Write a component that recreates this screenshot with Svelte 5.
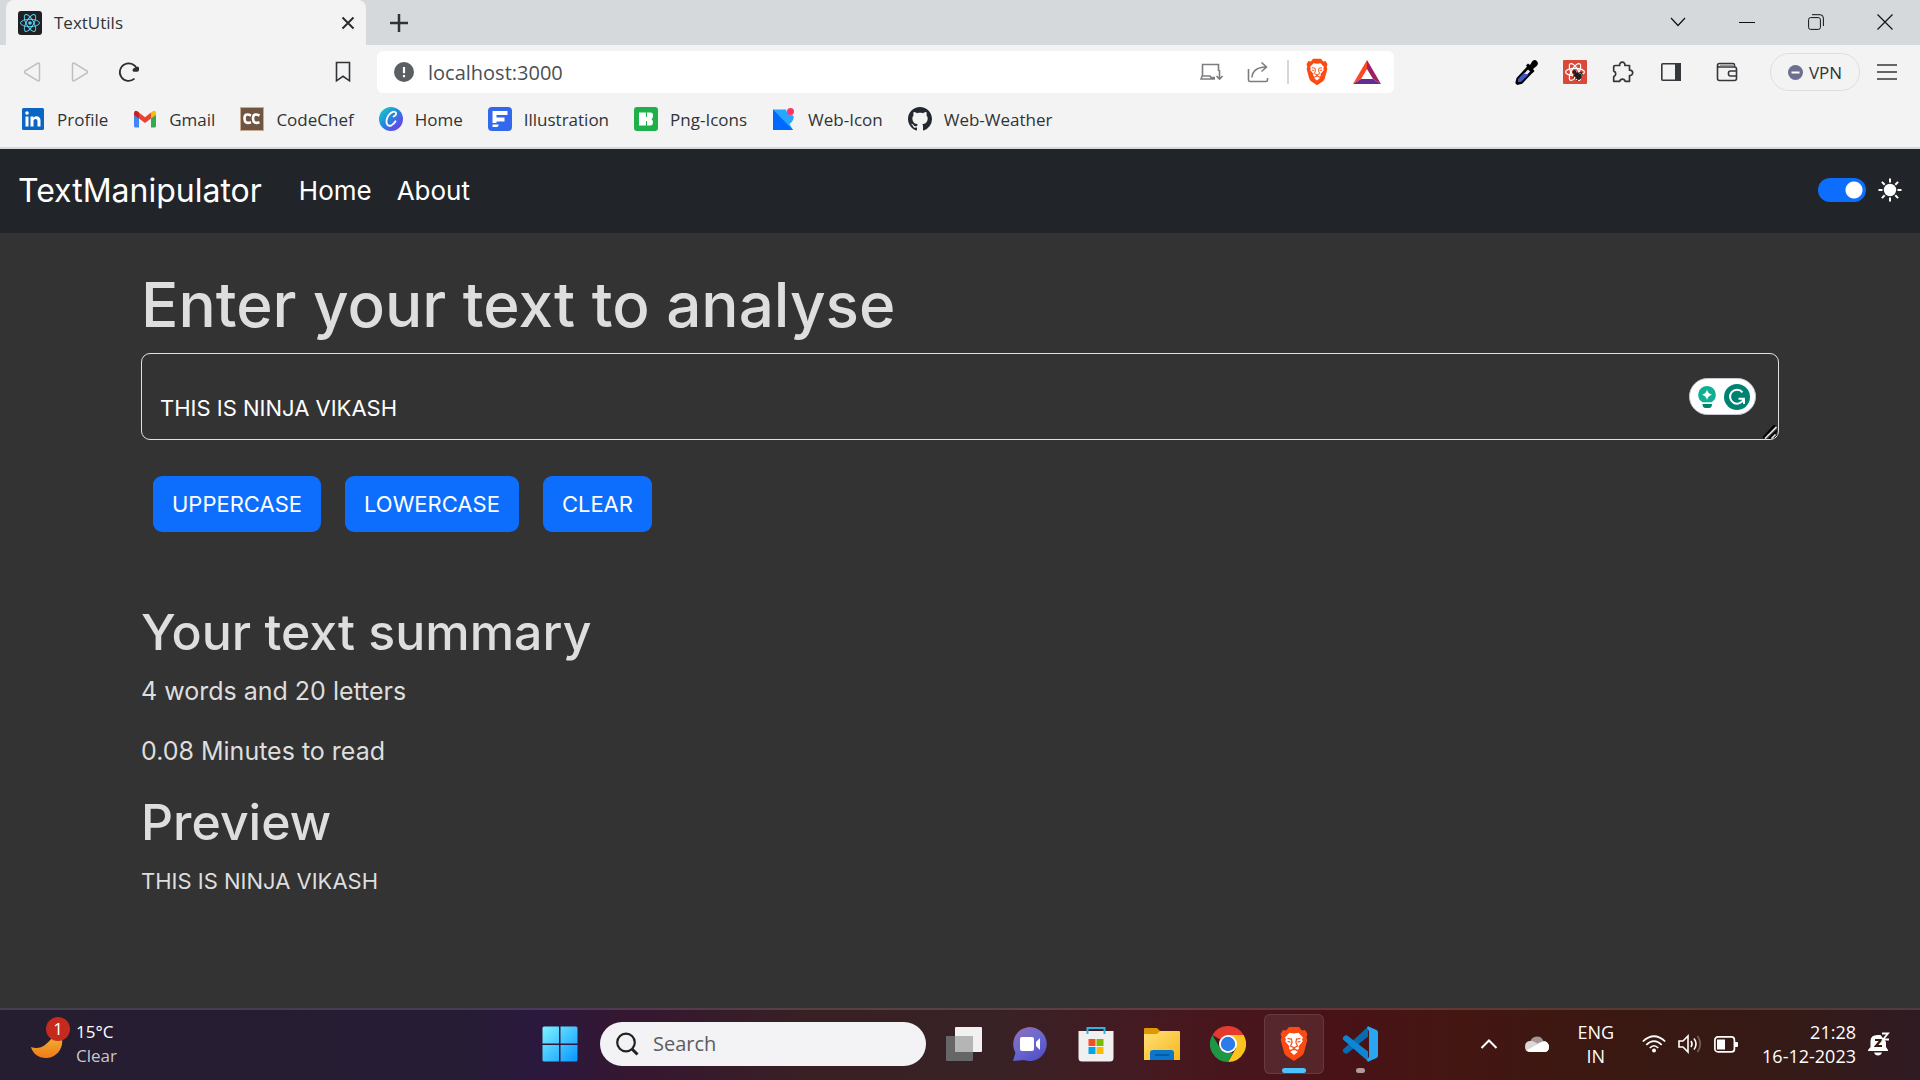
<script>
  let text = $state('\nTHIS IS NINJA VIKASH');
  let dark = $state(true);
  let address = $state('localhost:3000');

  const words = $derived(text.split(/\s+/).filter(Boolean).length);
  const letters = $derived(text.trim().length);
  const minutes = $derived((0.02 * words).toFixed(2));
</script>

{#snippet lion()}
  <path fill="#fb4a12" d="M10 1h10l3 3.400 3-.4 2.500 4-1 3 .8 3-3.300 12.500c-.5 1.600-1.500 2.800-2.800 3.700L15 35l-7.200-4.800c-1.300-.9-2.300-2.100-2.800-3.700L1.700 14l.8-3-1-3L4 4l3 .4z" />
  <path fill="#fff" d="M15 7.500l4.500-.7 4.500 4.700-1 2 .8 1.800-4.300 5.200.6 1.800-1.500 1.700-3.600-2.200-3.600 2.200-1.500-1.700.6-1.800-4.300-5.200.8-1.800-1-2 4.500-4.700zM15 23.500l3.800 2.300L15 29l-3.800-3.200z" />
  <path fill="none" stroke="#fb4a12" stroke-width="1.200" d="M8.500 12.500l4 .6.6 3.400-1.600 3.500 3.500 1.800 3.500-1.800-1.600-3.500.6-3.400 4-.6M15 21.500v3M8.500 15.500l3 .6M21.500 15.500l-3 .6" />
{/snippet}

{#snippet atom(color, width)}
  <g fill="none" stroke={color} stroke-width={width}>
    <ellipse cx="12" cy="12" rx="9.500" ry="3.700" />
    <ellipse cx="12" cy="12" rx="9.500" ry="3.700" transform="rotate(60 12 12)" />
    <ellipse cx="12" cy="12" rx="9.500" ry="3.700" transform="rotate(120 12 12)" />
  </g>
  <circle cx="12" cy="12" r="1.800" fill={color} />
{/snippet}

<div class="desktop">
  <header class="browser">
    <div class="tabs">
      <div class="tab">
        <svg width="24" height="24" viewBox="0 0 24 24" aria-hidden="true">
          <rect width="24" height="24" rx="3" fill="#202124" />
          {@render atom('#5ccfee', 1)}
        </svg>
        <span>TextUtils</span>
        <button class="plain" aria-label="Close tab">
          <svg width="16" height="16" viewBox="0 0 16 16"><path d="M2.500 2.500l11 11M13.500 2.500l-11 11" stroke="#2b2d30" stroke-width="2" /></svg>
        </button>
      </div>
      <button class="plain newtab" aria-label="New tab">
        <svg width="20" height="20" viewBox="0 0 20 20"><path d="M10 1v18M1 10h18" stroke="#303336" stroke-width="2.500" /></svg>
      </button>
      <div class="window-controls">
        <button class="plain" aria-label="Search tabs">
          <svg width="16" height="16" viewBox="0 0 16 16"><path d="M1 4l7 7.500L15 4" fill="none" stroke="#111" stroke-width="1.200" /></svg>
        </button>
        <button class="plain" aria-label="Minimize">
          <svg width="16" height="16" viewBox="0 0 16 16"><path d="M0 8.500h16" stroke="#111" /></svg>
        </button>
        <button class="plain" aria-label="Restore">
          <svg width="16" height="16" viewBox="0 0 16 16" fill="none" stroke="#111"><rect x=".6" y="3.600" width="11.800" height="11.800" rx="2" /><path d="M4 .7h8a3.400 3.400 0 0 1 3.400 3.400V12" /></svg>
        </button>
        <button class="plain" aria-label="Close">
          <svg width="16" height="16" viewBox="0 0 16 16"><path d="M.5.5l15 15M15.500.5l-15 15" stroke="#111" stroke-width="1.200" /></svg>
        </button>
      </div>
    </div>

    <div class="toolbar">
      <div class="nav-tools">
        <button class="plain" aria-label="Back">
          <svg width="20" height="22" viewBox="0 0 20 22"><path d="M15.500 2.300q2-1 2 1v15.400q0 2-2 1L3.200 12.200q-1.400-1.200 0-2.400z" fill="none" stroke="#bcbec0" stroke-width="1.500" /></svg>
        </button>
        <button class="plain" aria-label="Forward">
          <svg width="20" height="22" viewBox="0 0 20 22"><path d="M4.500 2.300q-2-1-2 1v15.400q0 2 2 1l12.300-7.500q1.400-1.200 0-2.400z" fill="none" stroke="#bcbec0" stroke-width="1.500" /></svg>
        </button>
        <button class="plain" aria-label="Reload">
          <svg width="22" height="22" viewBox="0 0 22 22"><path d="M16.500 17.700A8.800 8.800 0 1 1 19 8.500" fill="none" stroke="#2b2d30" stroke-width="1.700" /><path d="M14.500 9.300q0-2 2-2.300l3.200-1.500q1.300 0 1.300 1.500v2q0 1.800-2 1.800h-2.500q-2 0-2-1.500z" fill="#2b2d30" /></svg>
        </button>
        <button class="plain bookmark-btn" aria-label="Bookmark this page">
          <svg width="16" height="22" viewBox="0 0 16 22"><path d="M1.500 1.500h13v18.300L8 15.300l-6.500 4.500z" fill="none" stroke="#303336" stroke-width="1.600" /></svg>
        </button>
      </div>

      <div class="address">
        <svg width="20" height="20" viewBox="0 0 20 20" aria-hidden="true"><circle cx="10" cy="10" r="10" fill="#5b5e63" /><path d="M10 5v6.200M10 13v2.200" stroke="#fff" stroke-width="2.200" /></svg>
        <input aria-label="Address" bind:value={address} />
        <button class="plain" aria-label="Install app">
          <svg width="23" height="18" viewBox="0 0 23 18" fill="none" stroke="#7b7d80" stroke-width="1.600"><path d="M2.500 12V1.500h16V8M2.500 12l-1.500 4h14M2 13h8l1 1.500h4M19.500 7v9M16.500 13l3 3.200 3-3.200" /></svg>
        </button>
        <button class="plain" aria-label="Share">
          <svg width="22" height="22" viewBox="0 0 22 22" fill="none" stroke="#7b7d80" stroke-width="1.600"><path d="M1.500 8v11q0 1.500 1.500 1.500h16q1.500 0 1.500-1.500v-2M5 16.500Q5.500 6.500 19 6M14.500 1.500L19.500 6l-5 4.500" /></svg>
        </button>
        <span class="rule"></span>
        <button class="plain" aria-label="Brave Shields">
          <svg width="24" height="28" viewBox="0 0 30 36">{@render lion()}</svg>
        </button>
        <button class="plain" aria-label="Brave Rewards">
          <svg width="28" height="24" viewBox="0 0 28 24"><path d="M14 0L0 24l8-5 6-10z" fill="#ff4724" /><path d="M14 0l14 24-8-5-6-10z" fill="#9e1f63" /><path d="M0 24l8-5h12l8 5z" fill="#662d91" /></svg>
        </button>
      </div>

      <div class="extensions">
        <button class="plain" aria-label="Color picker">
          <svg width="24" height="26" viewBox="0 0 24 26"><path d="M13 8.500l4 4L6.500 23.500l-4 1-.8-.8 1-4z" fill="#dfe6ff" stroke="#000" stroke-width="2.600" /><path d="M8.500 14.500l5 1L6 23H3v-3z" fill="#3f58c8" /><path d="M11 6.500l2-2 2 1.500 2.500-4Q20 0 22 2.200q2 2.300-.3 4.800L18 10l1.500 2-2 2z" fill="#000" /></svg>
        </button>
        <button class="plain" aria-label="React Developer Tools">
          <svg width="24" height="24" viewBox="0 0 24 24"><rect width="24" height="24" rx="1" fill="#d9493a" />{@render atom('#fff', 1.2)}<ellipse cx="15" cy="16" rx="4" ry="3" transform="rotate(45 15 16)" fill="#221c1c" /><circle cx="11.500" cy="12" r="2" fill="#221c1c" /><path d="M10 16l8-4M12 19l8-5M14 21l5-9M10 18l3-5" stroke="#221c1c" /></svg>
        </button>
        <button class="plain" aria-label="Extensions">
          <svg width="22" height="22" viewBox="0 0 22 22"><path d="M3.500 4.500h4.200a2.700 2.700 0 1 1 5.200 0h4.600v4.700a2.700 2.700 0 1 1 0 5.300v5.800h-4.300a2.800 2.800 0 0 0-5.500 0H1.700v-4.800a2.800 2.800 0 0 0 0-5.400V6q0-1.500 1.800-1.500z" fill="none" stroke="#34373b" stroke-width="1.700" stroke-linejoin="round" /></svg>
        </button>
        <button class="plain" aria-label="Sidebar">
          <svg width="20" height="18" viewBox="0 0 20 18"><rect x=".8" y=".8" width="18.400" height="16.400" rx="1" fill="none" stroke="#34373b" stroke-width="1.600" /><path d="M14 0h6v18h-6z" fill="#34373b" /></svg>
        </button>
        <button class="plain wallet" aria-label="Wallet">
          <svg width="22" height="20" viewBox="0 0 22 20" fill="none" stroke="#34373b" stroke-width="1.600"><path d="M1.500 3.500v13q0 2 2 2h15q2 0 2-2V7q0-2-2-2H3.500q-2 0-2-1.500 0-2 2-2H17q1.500 0 1.500 1.500v2M20.500 9h-6q-2 0-2 2v1q0 2 2 2h6" /><path d="M4 3.300h13" stroke="#999" /></svg>
        </button>
        <button class="plain vpn">
          <svg width="15" height="15" viewBox="0 0 15 15" aria-hidden="true"><circle cx="7.500" cy="7.500" r="7.500" fill="#6b7090" /><path d="M3.500 7.500h8" stroke="#fff" stroke-width="2" /></svg>
          VPN
        </button>
        <button class="plain" aria-label="Menu">
          <svg width="20" height="16" viewBox="0 0 20 16"><path d="M0 1h20M0 8h20M0 15h20" stroke="#34373b" stroke-width="1.600" /></svg>
        </button>
      </div>
    </div>

    <nav class="bookmarks" aria-label="Bookmarks">
      <a href="#profile">
        <svg width="24" height="24" viewBox="0 0 24 24"><rect x="1" y="1" width="22" height="22" rx="1.500" fill="#0a66c2" /><path d="M4.500 9.500h3v10h-3zM9.500 9.500h3v1.400c1.500-2.600 7-2.300 7 2.600v6h-3v-5.300c0-3-4-2.800-4 0v5.300h-3z" fill="#fff" /><circle cx="6" cy="6" r="1.800" fill="#fff" /></svg>
        Profile
      </a>
      <a href="#gmail">
        <svg width="24" height="24" viewBox="0 0 24 24"><path d="M1 6v13q0 1.500 1.500 1.500H6V9z" fill="#4285f4" /><path d="M23 6v13q0 1.500-1.500 1.500H18V9z" fill="#34a853" /><path d="M6 5.500l6 4.700 6-4.700v6L12 16l-6-4.500z" fill="#ea4335" /><path d="M1 6q.5-3.500 3.800-1.500L6 5.500v6L1 8z" fill="#c5221f" /><path d="M23 6q-.5-3.500-3.800-1.500L18 5.500v6L23 8z" fill="#fbbc04" /></svg>
        Gmail
      </a>
      <a href="#codechef">
        <svg width="24" height="24" viewBox="0 0 24 24"><rect width="24" height="24" fill="#c6ab94" /><rect x="1" y="1" width="22" height="22" fill="#6f5442" /><path d="M11 8.500Q4.500 5.500 4.500 11.500t6.500 3.800M19.500 8.500Q13 5.500 13 11.500t6.500 3.800" fill="none" stroke="#fff" stroke-width="2.600" /></svg>
        CodeChef
      </a>
      <a href="#home">
        <svg width="24" height="24" viewBox="0 0 24 24"><defs><linearGradient id="canva" x1="0" y1="0" x2="1" y2="1"><stop offset="0" stop-color="#16d8ca" /><stop offset=".45" stop-color="#2389dc" /><stop offset="1" stop-color="#8328f0" /></linearGradient></defs><circle cx="12" cy="12" r="12" fill="url(#canva)" /><path d="M14.500 9.500q3-1 2.500-3.500-1.500-3-5.500.2-4.500 4.500-4 9.300 1 4.500 5 2.800 2.500-1.300 4-4" fill="none" stroke="#fff" stroke-width="1.800" stroke-linecap="round" /></svg>
        Home
      </a>
      <a href="#illustration">
        <svg width="24" height="24" viewBox="0 0 24 24"><rect width="24" height="24" rx="4" fill="#3268ed" /><path d="M4.500 4h15v4H8.500v2.500h8v4h-8V16h-4zM4.500 17.500h6V19l-1.500 1h-4.500z" fill="#fff" /></svg>
        Illustration
      </a>
      <a href="#png-icons">
        <svg width="24" height="24" viewBox="0 0 24 24"><rect width="24" height="24" rx="3" fill="#20b04b" /><path d="M5 5.500h7v13H5zM11 10h3v4h-3zM13 5.500h3.500q2.500 0 2.500 3t-1.500 3.500Q19 13 19 15.500t-2.500 3H13z" fill="#fff" /><path d="M12.500 5.500V10M12.500 14v4.500" stroke="#20b04b" /></svg>
        Png-Icons
      </a>
      <a href="#web-icon">
        <svg width="24" height="24" viewBox="0 0 24 24"><path d="M1 2.500h13q1 5.500 7.500 6 1 5-4 8.500L21 23H1z" fill="#28a5ff" /><path d="M1 2.500L21 23H1z" fill="#006aff" /><circle cx="18.500" cy="4.500" r="3.500" fill="#ff3565" /></svg>
        Web-Icon
      </a>
      <a href="#web-weather">
        <svg width="24" height="24" viewBox="0 0 16 16"><path fill="#24292f" d="M8 0C3.580 0 0 3.580 0 8c0 3.540 2.290 6.530 5.470 7.590.4.07.55-.17.55-.38 0-.19-.01-.82-.01-1.490-2.010.37-2.530-.49-2.690-.94-.09-.23-.48-.94-.82-1.130-.28-.15-.68-.52-.01-.53.63-.01 1.080.58 1.230.82.72 1.210 1.870.87 2.330.66.07-.52.28-.87.51-1.070-1.780-.2-3.640-.89-3.640-3.950 0-.87.31-1.590.82-2.150-.08-.2-.36-1.020.08-2.120 0 0 .67-.21 2.200.82.64-.18 1.320-.27 2-.27.68 0 1.360.09 2 .27 1.530-1.040 2.200-.82 2.200-.82.44 1.100.16 1.920.08 2.120.51.56.82 1.270.82 2.150 0 3.070-1.870 3.750-3.650 3.950.29.25.54.73.54 1.480 0 1.070-.01 1.930-.01 2.200 0 .21.15.46.55.38A8.010 8.010 0 0016 8c0-4.420-3.580-8-8-8z" /></svg>
        Web-Weather
      </a>
    </nav>
  </header>

  <nav class="navbar" aria-label="Main">
    <a class="brand" href="#top">TextManipulator</a>
    <a href="#home">Home</a>
    <a href="#about">About</a>
    <label class="mode">
      <input type="checkbox" role="switch" bind:checked={dark} aria-label="Dark mode" />
      <svg width="24" height="24" viewBox="0 0 24 24" aria-hidden="true"><circle cx="12" cy="12" r="6.200" fill="#fff" /><path d="M12 .5v4M12 19.500v4M.5 12h4M19.500 12h4M3.900 3.900l2.800 2.800M17.300 17.300l2.800 2.800M3.900 20.100l2.800-2.800M17.300 6.700l2.800-2.800" stroke="#fff" stroke-width="2" /></svg>
    </label>
  </nav>

  <main class:light={!dark}>
    <h1><label for="source">Enter your text to analyse</label></h1>
    <div class="editor">
      <textarea id="source" spellcheck="false" bind:value={text}></textarea>
      <svg class="grip" width="14" height="14" viewBox="0 0 14 14" aria-hidden="true"><path d="M0 13L12 0M6 14l8-8" stroke="#000" stroke-width="2" /><path d="M2 13.500L13.500 2M8.500 13.500l4-4" stroke="#dedede" stroke-width="1.600" /></svg>
      <div class="assistant">
        <svg width="18" height="24" viewBox="0 0 18 24" aria-hidden="true"><path d="M9 1a8.800 8.800 0 0 1 4.500 16.300h-9A8.800 8.800 0 0 1 9 1z" fill="#0fb092" /><path d="M9 4.500q1 4.300 5 5.300-4 1-5 5.300-1-4.300-5-5.300 4-1 5-5.300z" fill="#fff" /><path d="M4.500 19h9.500q0 4-3 4H7.500q-3 0-3-4z" fill="#008272" /></svg>
        <svg width="26" height="26" viewBox="0 0 26 26" aria-hidden="true"><circle cx="13" cy="13" r="13" fill="#008272" /><path d="M18.500 8.300a7 7 0 1 0 1.200 6.500H14.500M20 20v-5.200" fill="none" stroke="#fff" stroke-width="2" /></svg>
      </div>
    </div>
    <div class="actions">
      <button onclick={() => (text = text.toUpperCase())}>UPPERCASE</button>
      <button onclick={() => (text = text.toLowerCase())}>LOWERCASE</button>
      <button onclick={() => (text = '')}>CLEAR</button>
    </div>
    <section>
      <h2>Your text summary</h2>
      <p>{words} words and {letters} letters</p>
      <p>{minutes} Minutes to read</p>
      <h2>Preview</h2>
      <p class="preview">{text}</p>
    </section>
  </main>

  <footer class="taskbar">
    <button class="plain weather">
      <span class="moon">
        <svg width="34" height="34" viewBox="0 0 34 34" aria-hidden="true"><defs><linearGradient id="moon" x1="0" y1="0" x2="0" y2="1"><stop offset="0" stop-color="#f6c33c" /><stop offset="1" stop-color="#ee7a18" /></linearGradient></defs><path d="M28 2c9 12 3 28-11 29C9 31.500 3 27 1 20c5 2 10 1 14-2 5-4 9-9 13-16z" fill="url(#moon)" /></svg>
        <span class="badge">1</span>
      </span>
      <span class="stack"><span>15°C</span><span class="dim">Clear</span></span>
    </button>

    <div class="apps">
      <button class="plain app" aria-label="Start">
        <svg width="36" height="36" viewBox="0 0 36 36"><defs><linearGradient id="win" x1="0" y1="0" x2="1" y2="1"><stop offset="0" stop-color="#7df4ff" /><stop offset="1" stop-color="#0796ff" /></linearGradient></defs><path d="M2 .5h15v17H.5V2Q.5.5 2 .5zM18.500.5H34q1.500 0 1.500 1.500v15.500h-17zM.5 19H17v16.500H2Q.5 35.500.5 34zM18.500 19h17v15q0 1.500-1.500 1.500H18.500z" fill="url(#win)" /></svg>
      </button>
      <label class="search">
        <svg width="24" height="24" viewBox="0 0 24 24" aria-hidden="true"><circle cx="11" cy="10.500" r="8.800" fill="none" stroke="#222" stroke-width="2.200" /><path d="M17 17l5.500 5.500" stroke="#222" stroke-width="3" /></svg>
        <input type="text" placeholder="Search" aria-label="Search" />
      </label>
      <button class="plain app" aria-label="Task view">
        <svg width="36" height="36" viewBox="0 0 36 36"><rect x="9" y="1" width="27" height="25" rx="1" fill="#f1f1f1" /><rect y="10" width="27" height="25" rx="1" fill="#666" /><path d="M9 10h18v16H9z" fill="#b5b5b5" /></svg>
      </button>
      <button class="plain app" aria-label="Chat">
        <svg width="36" height="36" viewBox="0 0 36 36"><defs><linearGradient id="chat" x1="0" y1="0" x2=".7" y2="1"><stop offset="0" stop-color="#9a6bb0" /><stop offset=".5" stop-color="#6b6bd0" /><stop offset="1" stop-color="#5450c8" /></linearGradient></defs><path d="M18 1a17 17 0 1 1-6 33L1 35l2.500-8.500A17 17 0 0 1 18 1z" fill="url(#chat)" /><rect x="8" y="11" width="14" height="14" rx="2" fill="#fff" /><path d="M24 16l4-4v12l-4-4z" fill="#fff" /></svg>
      </button>
      <button class="plain app" aria-label="Microsoft Store">
        <svg width="36" height="36" viewBox="0 0 36 36"><path d="M.5 5h35v27q0 3.500-3.500 3.500H4Q.5 35.500.5 32z" fill="#f0f0f0" /><path d="M9.500 8V2h17v6" fill="none" stroke="#2cb3ea" stroke-width="2" /><path d="M10.500 13h7v7h-7z" fill="#f25022" /><path d="M18.500 13h7v7h-7z" fill="#7fba00" /><path d="M10.500 21h7v7h-7z" fill="#00a4ef" /><path d="M18.500 21h7v7h-7z" fill="#ffb900" /></svg>
      </button>
      <button class="plain app" aria-label="File Explorer">
        <svg width="36" height="36" viewBox="0 0 36 36"><defs><linearGradient id="folder" x1="0" y1="0" x2="1" y2="1"><stop offset="0" stop-color="#ffe07a" /><stop offset="1" stop-color="#f7b71a" /></linearGradient></defs><path d="M0 3q0-1 1-1h12l3 3v4H0z" fill="#dd9a00" /><path d="M0 8h13l3-3h19q1 0 1 1v28H0z" fill="url(#folder)" /><path d="M6 34v-7q0-3 3-3h18q3 0 3 3v7z" fill="#0a77cc" /><path d="M11 29h14" stroke="#07508f" stroke-width="1.500" /></svg>
      </button>
      <button class="plain app" aria-label="Chrome">
        <svg width="36" height="36" viewBox="0 0 36 36"><path d="M18 18L2.400 9a18 18 0 0 1 31.200 0z" fill="#e33b2e" /><path d="M18 9h15.600A18 18 0 0 1 18 36l7.800-13.500z" fill="#fcc31e" /><path d="M2.400 9l7.800 13.500L18 27h5.200L18 36A18 18 0 0 1 2.400 9z" fill="#1e9644" /><circle cx="18" cy="18" r="9" fill="#fff" /><circle cx="18" cy="18" r="7.200" fill="#2b7bea" /></svg>
      </button>
      <button class="plain app active" aria-label="Brave">
        <svg width="30" height="36" viewBox="0 0 30 36">{@render lion()}</svg>
        <span class="indicator"></span>
      </button>
      <button class="plain app" aria-label="Visual Studio Code">
        <svg width="36" height="36" viewBox="0 0 36 36"><path d="M3 27.500q-3-2-2-4L26 .7v9.800L6.500 26.500q-2 1.800-3.500 1z" fill="#0a6ab0" /><path d="M3 9.500q-3 2-2 4L26 35.300v-9.800L6.500 10.500Q4.500 8.500 3 9.500z" fill="#0f86d3" /><path d="M26 .3L34.500 4Q36 4.800 36 6.500v23q0 1.700-1.500 2.500L26 35.700l-1-1.200 2-4v-25l-2-4z" fill="#2aa5f2" /></svg>
        <span class="indicator idle"></span>
      </button>
    </div>

    <div class="tray">
      <button class="plain" aria-label="Show hidden icons">
        <svg width="18" height="12" viewBox="0 0 18 12"><path d="M1.500 10L9 2.500l7.500 7.500" fill="none" stroke="#fff" stroke-width="2" /></svg>
      </button>
      <button class="plain cloud" aria-label="OneDrive">
        <svg width="24" height="16" viewBox="0 0 24 16"><path d="M5 7a7 7 0 0 1 13-3l1 3-8 5z" fill="#a39796" /><path d="M5.500 5Q9 4.500 12 7.500l7-2.500q5 1 5 6 0 5-5 5H5q-5 0-5-5.500T5.500 5z" fill="#dcd6d5" /><path d="M2 14l12-6.500q3-2.500 6.500-2 3.500 2 3.500 5.500 0 5-5 5H5q-2 0-3-2z" fill="#fff" /></svg>
      </button>
      <button class="plain stack lang"><span>ENG</span><span>IN</span></button>
      <button class="plain status" aria-label="Network, volume and battery">
        <svg width="24" height="18" viewBox="0 0 24 18" fill="none" stroke="#fff" stroke-width="1.700"><path d="M.8 6.500q11.200-10.500 22.400 0M4.300 9.800q7.700-7.500 15.400 0M7.800 13q4.200-4.500 8.400 0" /><circle cx="12" cy="15.500" r="2" fill="#fff" stroke="none" /></svg>
        <svg width="24" height="20" viewBox="0 0 24 20" fill="none" stroke="#fff" stroke-width="1.600"><path d="M1 7h4l5-5v16l-5-5H1zM13 7q2 3 0 6M16 4.500q4 5.500 0 11" /><path d="M19.500 2q5.500 8 0 16" stroke="#7b615c" /></svg>
        <svg width="24" height="17" viewBox="0 0 24 17"><rect x=".9" y=".9" width="19.500" height="15" rx="3" fill="none" stroke="#fff" stroke-width="1.700" /><path d="M3 3.500h8v10H3zM21 6h2q1 0 1 1v3q0 1-1 1h-2z" fill="#fff" /></svg>
      </button>
      <button class="plain stack clock"><span>21:28</span><span>16-12-2023</span></button>
      <button class="plain" aria-label="Notifications">
        <svg width="22" height="24" viewBox="0 0 22 24"><path d="M0 18l2.500-3V9q0-6 7-6h3l5.500 7v5l2 3v1H0zM6 20.500h8q-1 3-4 3t-4-3z" fill="#fff" /><path d="M7 8h6l-5 6h6" fill="none" stroke="#351913" stroke-width="2.200" /><path d="M14 1.500h6l-5 6h6" fill="none" stroke="#fff" stroke-width="1.800" /></svg>
      </button>
    </div>
  </footer>
</div>

<style>
  :global(body) {
    margin: 0;
  }

  .desktop {
    display: flex;
    flex-direction: column;
    min-height: 100vh;
    font-family: 'Open Sans', 'Noto Sans', sans-serif;
    font-size: 17px;
    color: #303336;
  }

  .desktop :global(*) {
    box-sizing: border-box;
  }

  svg {
    display: block;
    flex: none;
  }

  a {
    color: inherit;
    text-decoration: none;
  }

  .plain {
    display: flex;
    align-items: center;
    padding: 0;
    border: 0;
    background: none;
    color: inherit;
    font: inherit;
  }

  .browser {
    background: #f3f3f3;
    border-bottom: 2px solid #d5d9db;
  }

  .tabs {
    display: flex;
    align-items: center;
    height: 45px;
    padding-left: 6px;
    background: #d5d9dc;
  }

  .tab {
    display: flex;
    align-items: center;
    gap: 12px;
    width: 360px;
    height: 100%;
    padding: 0 10px 0 12px;
    border-radius: 8px 8px 0 0;
    background: #f3f3f3;
  }

  .tab span {
    flex: 1;
  }

  .newtab {
    margin-left: 23px;
  }

  .window-controls {
    display: flex;
    gap: 53px;
    margin-left: auto;
    padding: 0 27px 2px 0;
  }

  .toolbar {
    display: flex;
    align-items: center;
    height: 54px;
    padding: 0 21px 0 22px;
  }

  .nav-tools {
    display: flex;
    align-items: center;
    gap: 28px;
    width: 355px;
    padding-right: 26px;
  }

  .bookmark-btn {
    margin-left: auto;
  }

  .address {
    display: flex;
    flex: 1;
    align-items: center;
    gap: 24px;
    height: 42px;
    padding: 0 13px 0 17px;
    border-radius: 6px;
    background: #fff;
  }

  .address input {
    flex: 1;
    min-width: 0;
    margin-left: -10px;
    padding: 0;
    border: 0;
    outline: 0;
    background: none;
    color: #4c4f53;
    font: inherit;
    font-size: 20px;
  }

  .rule {
    width: 2px;
    height: 24px;
    margin-right: -8px;
    margin-left: -6px;
    background: #d5d7d9;
  }

  .extensions {
    display: flex;
    align-items: center;
    justify-content: flex-end;
    gap: 24px;
    width: 505px;
  }

  .extensions .plain {
    justify-content: center;
    min-width: 24px;
  }

  .wallet {
    margin: 0 7px 0 8px;
  }

  .vpn {
    gap: 6px;
    width: 90px;
    height: 38px;
    margin-right: -9px;
    border: 1px solid #dedfe0;
    border-radius: 19px;
  }

  .bookmarks {
    display: flex;
    gap: 25px;
    height: 48px;
    padding: 8px 21px 0;
  }

  .bookmarks a {
    display: flex;
    align-items: center;
    gap: 12px;
    height: 24px;
  }

  .navbar {
    display: flex;
    align-items: center;
    gap: 25px;
    height: 84px;
    padding: 0 18px 2px;
    background: #212529;
    color: #fff;
    font-family: Inter, sans-serif;
    font-size: 26px;
  }

  .brand {
    margin-right: 12px;
    font-size: 32px;
  }

  .mode {
    display: flex;
    align-items: center;
    gap: 12px;
    margin-left: auto;
  }

  .mode input {
    width: 48px;
    height: 24px;
    margin: 0;
    appearance: none;
    border-radius: 12px;
    background: #0d6efd radial-gradient(circle at 36px 12px, #fff 8px, transparent 9px);
  }

  .mode input:not(:checked) {
    background: #6c757d radial-gradient(circle at 12px 12px, #fff 8px, transparent 9px);
  }

  main {
    flex: 1;
    padding: 36px 141px 0;
    background: #333;
    color: #dedede;
    font-family: Inter, sans-serif;
    font-size: 25px;
    line-height: 36px;
  }

  main.light {
    background: #fff;
    color: #212529;
  }

  h1,
  h2 {
    margin: 0 0 12px;
    font-weight: 500;
  }

  h1 {
    font-size: 62px;
    line-height: 72px;
  }

  h2 {
    font-size: 50px;
    line-height: 58px;
  }

  p {
    margin: 0 0 24px;
  }

  .preview {
    font-size: 22px;
  }

  .editor {
    position: relative;
  }

  textarea {
    display: block;
    width: 100%;
    height: 87px;
    padding: 0 18px;
    overflow: hidden;
    resize: vertical;
    border: 1px solid #dee2e6;
    border-radius: 9px;
    outline: 0;
    background: transparent;
    color: #fff;
    font: inherit;
    font-size: 22px;
    line-height: 36px;
  }

  .light textarea {
    color: #212529;
  }

  .grip {
    position: absolute;
    right: 2px;
    bottom: 1px;
    pointer-events: none;
  }

  .assistant {
    position: absolute;
    top: 25px;
    right: 23px;
    display: flex;
    align-items: center;
    gap: 8px;
    height: 37px;
    padding: 0 5px 0 8px;
    border: 1px solid #c9c6d2;
    border-radius: 19px;
    background: #fff;
  }

  .actions {
    display: flex;
    gap: 24px;
    padding: 36px 12px 71px;
  }

  .actions button {
    height: 56px;
    padding: 0 19px;
    border: 0;
    border-radius: 9px;
    background: #0d6efd;
    color: #fff;
    font: inherit;
    font-size: 22px;
  }

  .taskbar {
    display: grid;
    grid-template-columns: 1fr auto 1fr;
    align-items: center;
    height: 72px;
    background: linear-gradient(90deg, #251d30 0%, #261c34 24%, #2b183e 28%, #351730 33%, #382024 42%, #382226 52%, #471820 61%, #481216 70%, #451613 75%, #3a1811 84%, #351a16 93%, #301a23 100%);
    box-shadow: inset 0 2px #ffffff26;
    color: #fff;
    line-height: 24px;
  }

  .weather {
    gap: 12px;
    padding-left: 30px;
    text-align: left;
  }

  .moon {
    position: relative;
  }

  .badge {
    position: absolute;
    top: -10px;
    right: -6px;
    width: 24px;
    height: 24px;
    border-radius: 50%;
    background: #c42b1c;
    text-align: center;
  }

  .stack {
    display: flex;
    flex-direction: column;
  }

  .dim {
    color: #c9c6cc;
  }

  .apps {
    display: flex;
    align-items: center;
    gap: 6px;
  }

  .app {
    position: relative;
    justify-content: center;
    width: 60px;
    height: 60px;
    border: 1px solid transparent;
    border-radius: 6px;
  }

  .active {
    border-color: #ffffff1a;
    background: #ffffff14;
  }

  .indicator {
    position: absolute;
    bottom: 0;
    width: 24px;
    height: 5px;
    border-radius: 3px;
    background: #4cc2ff;
  }

  .idle {
    width: 9px;
    background: #b39a9a;
  }

  .search {
    display: flex;
    align-items: center;
    gap: 14px;
    width: 326px;
    height: 44px;
    margin: 0 2px 0 4px;
    padding: 0 16px 0 15px;
    border-radius: 22px;
    background: #f3f2f4;
  }

  .search input {
    flex: 1;
    min-width: 0;
    padding: 0;
    border: 0;
    outline: 0;
    background: none;
    font: inherit;
    font-size: 20px;
  }

  .search input::placeholder {
    color: #5c5c5f;
  }

  .tray {
    display: flex;
    align-items: center;
    justify-content: flex-end;
    gap: 12px;
    padding-right: 30px;
  }

  .tray .stack {
    font-size: 18px;
  }

  .cloud {
    margin: 0 16px 0 15px;
  }

  .status {
    gap: 12px;
    margin: 0 12px 0 16px;
  }

  .clock {
    align-items: flex-end;
  }
</style>
